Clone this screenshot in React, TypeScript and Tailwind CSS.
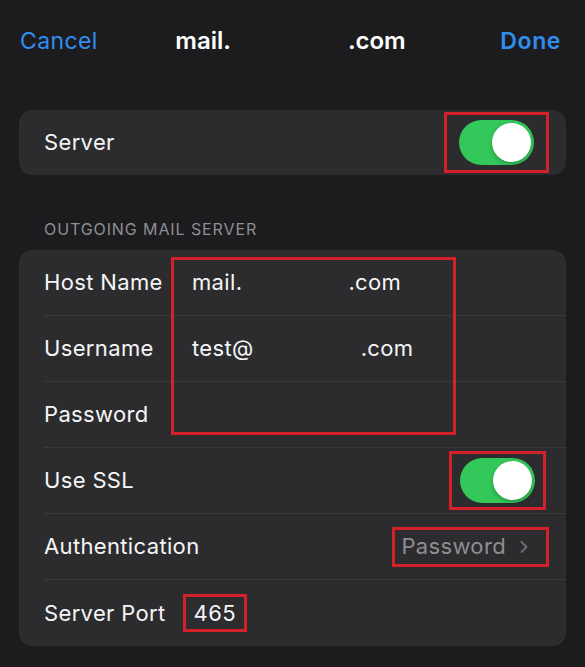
import React from 'react';
import { ChevronRight } from 'lucide-react';

function Toggle() {
  return (
    <div className="w-[75px] h-[45px] rounded-full bg-[#34c759] p-[3px] flex justify-end">
      <div className="w-[39px] h-[39px] rounded-full bg-white shadow-[0_2px_4px_rgba(0,0,0,0.25)]" />
    </div>
  );
}

function Row({ children, last }: { children: React.ReactNode; last?: boolean }) {
  return (
    <div className="pl-[25px] h-[66px]">
      <div className={`h-full flex items-center pr-[17px] ${last ? '' : 'border-b border-[#3a3a3c]'}`}>
        {children}
      </div>
    </div>
  );
}

const label = 'text-[22px] tracking-[0.35px]';

export default function App() {
  return (
    <div
      className="w-[585px] h-[667px] bg-[#1c1c1e] text-[#f5f5f7] overflow-hidden"
      style={{ fontFamily: 'Inter, "Liberation Sans", sans-serif' }}
    >
      <div className="h-[82px] grid grid-cols-[1fr_auto_1fr] items-center pl-[20px] pr-[24px]">
        <span className="text-[23px] tracking-[0.4px] text-[#2f8ef0]">Cancel</span>
        <span className="text-[24px] font-semibold text-white">
          mail.<span className="inline-block w-[117px]" />.com
        </span>
        <span className="justify-self-end text-[23px] tracking-[0.6px] font-semibold text-[#2f8ef0]">Done</span>
      </div>

      <div className="mx-[19px] mt-[28px] h-[65px] rounded-[13px] bg-[#2c2c2e] flex items-center justify-between pl-[25px] pr-[17px]">
        <span className={label}>Server</span>
        <div className="border-[3px] border-[#d3202b] px-[12px] py-[5px]">
          <Toggle />
        </div>
      </div>

      <div className="pl-[44px] pt-[45px] pb-[12px] text-[16px] leading-[18px] text-[#8e8e93] tracking-[0.9px]">
        OUTGOING MAIL SERVER
      </div>

      <div className="relative mx-[19px] rounded-[13px] bg-[#2c2c2e]">
        <Row>
          <span className={`w-[148px] ${label}`}>Host Name</span>
          <span className={label}>
            mail.<span className="inline-block w-[106px]" />.com
          </span>
        </Row>
        <Row>
          <span className={`w-[148px] ${label}`}>Username</span>
          <span className={label}>
            test@<span className="inline-block w-[107px]" />.com
          </span>
        </Row>
        <Row>
          <span className={`w-[148px] ${label}`}>Password</span>
        </Row>
        <Row>
          <span className={`flex-1 ${label}`}>Use SSL</span>
          <div className="border-[3px] border-[#d3202b] px-[8px] py-[4px] mr-[3px]">
            <Toggle />
          </div>
        </Row>
        <Row>
          <span className={`flex-1 ${label}`}>Authentication</span>
          <div className="border-[3px] border-[#d3202b] h-[40px] pl-[6px] pr-[12px] flex items-center gap-[8px]">
            <span className={`${label} text-[#8e8e93]`}>Password</span>
            <ChevronRight className="w-[20px] h-[20px] text-[#6e6e73]" strokeWidth={2.2} />
          </div>
        </Row>
        <Row last>
          <span className={label}>Server Port</span>
          <div className="ml-[17px] border-[3px] border-[#d3202b] h-[38px] px-[8px] flex items-center">
            <span className={label}>465</span>
          </div>
        </Row>

        <div className="absolute left-[152px] top-[7px] w-[285px] h-[178px] border-[3px] border-[#d3202b]" />
      </div>
    </div>
  );
}
